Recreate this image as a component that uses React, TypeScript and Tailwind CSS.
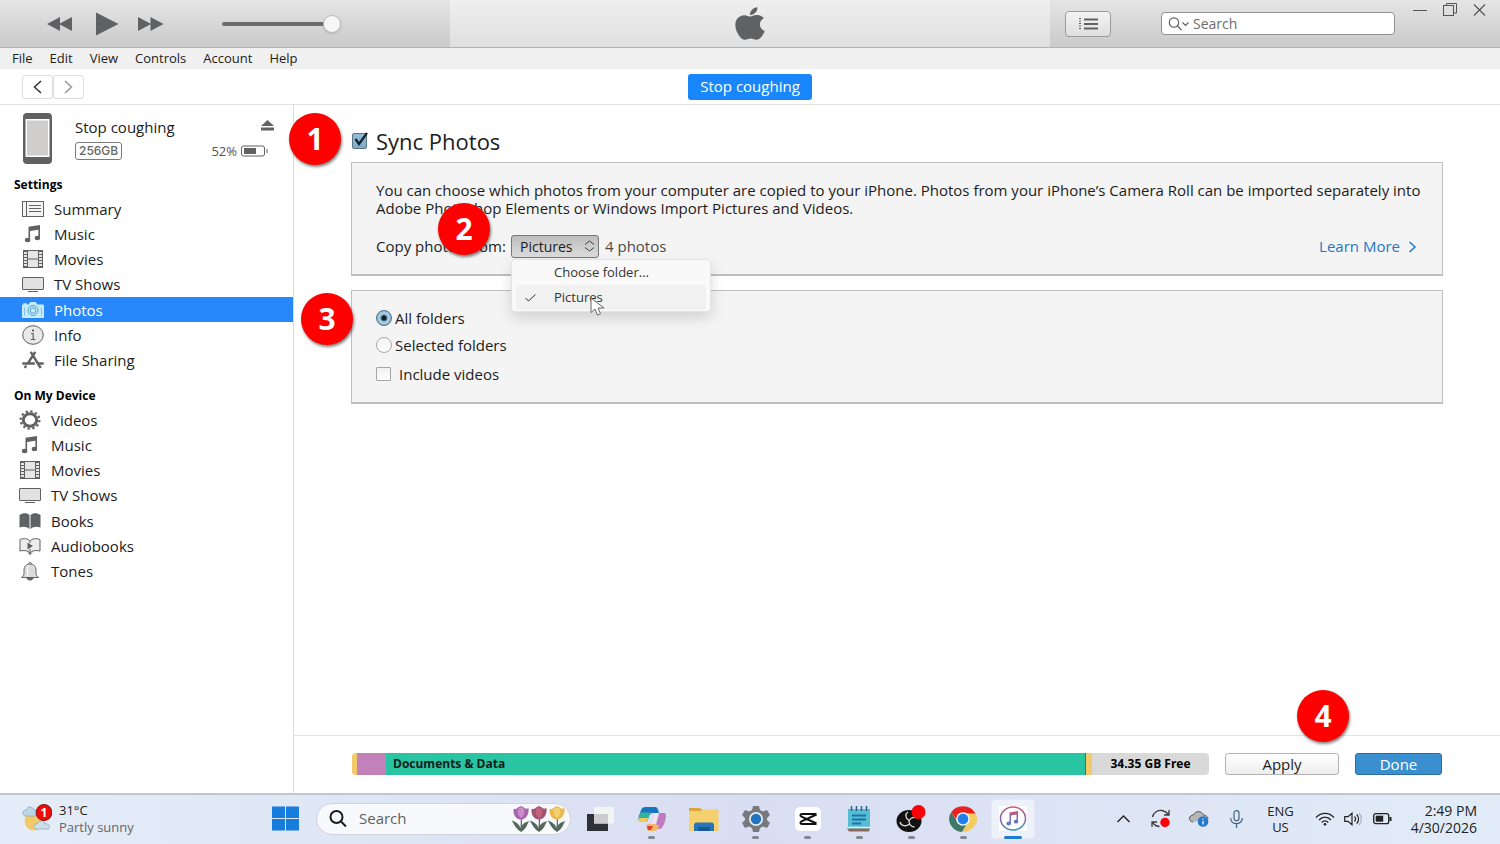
import { useState } from "react";
import type { ReactNode } from "react";
import { FaApple } from "react-icons/fa";

const GREY = "#606163";

function SummaryIcon() {
  return (
    <svg width="22" height="16" viewBox="0 0 22 16" fill="none" stroke={GREY}>
      <rect x="0.5" y="0.5" width="21" height="15" fill="#f4f4f4" />
      <path d="M4.5 0.5v15M7 4.5h12M7 7.5h12M7 10.5h12" />
    </svg>
  );
}

function MusicIcon() {
  return (
    <svg width="22" height="18" viewBox="0 0 22 18" fill={GREY}>
      <path d="M6.5 1.8 18 0v13h-1.6V4.800L8.1 6.1v9.200H6.5z" />
      <ellipse cx="5.6" cy="15" rx="2.7" ry="2.2" />
      <ellipse cx="15.4" cy="13" rx="2.7" ry="2.2" />
    </svg>
  );
}

function MoviesIcon() {
  return (
    <svg width="22" height="18" viewBox="0 0 22 18" fill="none" stroke={GREY}>
      <rect x="1.5" y="0.5" width="19" height="17" fill="#e6e6e6" />
      <path d="M5.5 0.5v17M16.5 0.5v17M5.5 9h11" />
      <path d="M3.5 1v16M18.5 1v16" strokeWidth="3" strokeDasharray="1 2" />
    </svg>
  );
}

function TvIcon() {
  return (
    <svg width="22" height="16" viewBox="0 0 22 16">
      <rect x="0.5" y="1.5" width="21" height="12" rx="0.5" fill="#e2e2e2" stroke={GREY} />
      <rect x="6" y="15" width="10" height="1" fill={GREY} />
    </svg>
  );
}

function PhotosIcon() {
  return (
    <svg width="22" height="16" viewBox="0 0 22 16" fill="none" stroke="#7cc1ee">
      <path
        d="M0.5 3h1V1.8h3V3h2.3l1.6-2.5h5.2L15.2 3h6.3v12.5h-21z"
        fill="#c5ecfa"
        stroke="#c5ecfa"
      />
      <circle cx="11" cy="8.5" r="5" stroke="#4d9fd0" />
      <circle cx="11" cy="8.5" r="2.8" stroke="#4d9fd0" />
      <path d="M2.5 5.5v8M19.5 5.5v8" />
    </svg>
  );
}

function InfoIcon() {
  return (
    <svg width="22" height="20" viewBox="0 0 22 20">
      <ellipse cx="11" cy="10" rx="10.3" ry="9.3" fill="#e8e8e8" stroke={GREY} />
      <rect x="10" y="4.5" width="2" height="2" fill={GREY} />
      <path d="M9 8.5h2.2v6M8.8 14.5h4.6" fill="none" stroke={GREY} strokeWidth="1.2" />
    </svg>
  );
}

function SharingIcon() {
  return (
    <svg width="22" height="18" viewBox="0 0 22 18" fill="none" stroke={GREY} strokeWidth="2.4">
      <path d="M13.3 0.8 5.8 12.5M4.2 14.5 2.8 17M8.7 0.8l10 16.2" />
      <path d="M0.3 12.5h12.5M16 12.5h5.7" />
    </svg>
  );
}

function GearIcon() {
  return (
    <svg width="22" height="20" viewBox="0 0 22 20" fill="none" stroke={GREY}>
      <ellipse cx="11" cy="10" rx="6.7" ry="6.2" strokeWidth="3" />
      <ellipse cx="11" cy="10" rx="9.4" ry="8.6" strokeWidth="2.2" strokeDasharray="2.3 2.42" />
    </svg>
  );
}

function BooksIcon() {
  return (
    <svg width="22" height="16" viewBox="0 0 22 16" fill={GREY}>
      <path d="M0.5 2C4-0.3 8-0.3 10.5 2v14C8 13.5 4 13 0.5 14.5z" />
      <path d="M21.5 2C18-0.3 14-0.3 11.5 2v14c2.5-2.5 6.5-3 10-1.5z" />
    </svg>
  );
}

function AudiobooksIcon() {
  return (
    <svg width="22" height="17" viewBox="0 0 22 17" stroke={GREY} fill="none">
      <path d="M1 1.5C5 0 9 0.5 11 3c2-2.5 6-3 10-1.5V13c-4-1-8-0.5-10 2-2-2.5-6-3-10-2z" fill="#ececec" />
      <path d="M11 3v2M11 11v5.5M9 14.5l2 2 2-2" />
      <path d="M8.5 4.5 14 8l-5.5 3.5z" fill={GREY} stroke="none" />
    </svg>
  );
}

function BellIcon() {
  return (
    <svg width="22" height="19" viewBox="0 0 22 19" stroke={GREY} fill="none">
      <path d="M2.5 15.5c3-2 2.5-4 2.5-7.5 0-3.5 2.5-6 6-6s6 2.5 6 6c0 3.5-.5 5.5 2.5 7.5z" fill="#dcdcdc" />
      <path d="M8.5 14V7.5C8.5 5.5 9 4 10 3" stroke="#fff" />
      <path d="M9.5 2c0-2 3-2 3 0" />
      <path d="M8 16.5c1 2 5 2 6 0z" fill={GREY} />
    </svg>
  );
}

const settings = [
  { label: "Summary", icon: <SummaryIcon /> },
  { label: "Music", icon: <MusicIcon /> },
  { label: "Movies", icon: <MoviesIcon /> },
  { label: "TV Shows", icon: <TvIcon /> },
  { label: "Photos", icon: <PhotosIcon /> },
  { label: "Info", icon: <InfoIcon /> },
  { label: "File Sharing", icon: <SharingIcon /> },
];

const onDevice = [
  { label: "Videos", icon: <GearIcon /> },
  { label: "Music", icon: <MusicIcon /> },
  { label: "Movies", icon: <MoviesIcon /> },
  { label: "TV Shows", icon: <TvIcon /> },
  { label: "Books", icon: <BooksIcon /> },
  { label: "Audiobooks", icon: <AudiobooksIcon /> },
  { label: "Tones", icon: <BellIcon /> },
];

function StepBadge({ step, className }: { step: number; className: string }) {
  return (
    <span
      className={`absolute z-20 flex size-[52px] items-center justify-center rounded-full bg-[#fe0000] text-[30px] leading-none font-bold text-white shadow-[1px_2px_3px_rgba(0,0,0,0.5)] ${className}`}
    >
      {step}
    </span>
  );
}

function TitleBar() {
  return (
    <header className="flex h-12 shrink-0 border-b border-[#b3b3af] bg-linear-to-b from-[#e5e5e5] to-[#cacaca]">
      <div className="flex w-3/10 items-center pl-[47px]">
        <button aria-label="Previous">
          <svg width="26" height="14" viewBox="0 0 26 14" fill={GREY}>
            <path d="M0 7 13 0v14zM12 7 25 0v14z" />
          </svg>
        </button>
        <button aria-label="Play" className="ml-[23px]">
          <svg width="23" height="24" viewBox="0 0 23 24" fill={GREY}>
            <path d="M0 0.5 22.5 12 0 23.5z" />
          </svg>
        </button>
        <button aria-label="Next" className="ml-[19px]">
          <svg width="26" height="14" viewBox="0 0 26 14" fill={GREY}>
            <path d="M0 0 13 7 0 14zM12.5 0l13 7-13 7z" />
          </svg>
        </button>
        <input
          type="range"
          aria-label="Volume"
          defaultValue={100}
          className="ml-[58px] h-1 w-[119px] appearance-none rounded-full bg-[#6b6c6e] [&::-webkit-slider-thumb]:size-[18px] [&::-webkit-slider-thumb]:appearance-none [&::-webkit-slider-thumb]:rounded-full [&::-webkit-slider-thumb]:border [&::-webkit-slider-thumb]:border-[#bdbdbd] [&::-webkit-slider-thumb]:bg-[#f6f6f6] [&::-webkit-slider-thumb]:shadow-sm"
        />
      </div>
      <div className="flex w-2/5 items-center justify-center bg-linear-to-b from-[#efefef] to-[#e0e0e0]">
        <FaApple preserveAspectRatio="none" color={GREY} className="h-[37px] w-[30px]" />
      </div>
      <div className="flex w-3/10 items-start justify-between pr-[14px] pl-[15px]">
        <button
          aria-label="Up next"
          className="mt-[11px] flex h-[26px] w-[46px] items-center justify-center rounded-[4px] border border-[#9a9a9a] bg-linear-to-b from-[#f4f4f4] to-[#dedede]"
        >
          <svg width="20" height="12" viewBox="0 0 20 12" stroke={GREY}>
            <path d="M6 1.5h14M6 6h14M6 10.5h14" strokeWidth="2" />
            <path d="M1 0.500h2M1 3h2M1 5.500h2M1 8h2M1 10.500h2" />
          </svg>
        </button>
        <label className="mt-3 ml-[50px] flex h-[23px] max-w-[234px] flex-1 items-center rounded-[4px] border border-[#8f9194] bg-white pl-1.5">
          <svg className="shrink-0" width="25" height="14" viewBox="0 0 25 14" fill="none" stroke={GREY} strokeWidth="1.2">
            <circle cx="6" cy="5.5" r="4.7" />
            <path d="m9.5 9 4 4M14.5 5.5l3 3 3-3" />
          </svg>
          <input
            type="text"
            placeholder="Search"
            className="w-full min-w-0 text-sm text-gray-700 outline-none placeholder:text-[#6d6d6d]"
          />
        </label>
        <div className="ml-auto flex gap-4 pt-[3px] pl-2">
          <button aria-label="Minimize">
            <svg width="14" height="14" viewBox="0 0 14 14" stroke="#555">
              <path d="M0 7.5h14" />
            </svg>
          </button>
          <button aria-label="Restore">
            <svg width="14" height="14" viewBox="0 0 14 14" fill="none" stroke="#555">
              <rect x="0.5" y="2.5" width="10" height="10" />
              <path d="M3.5 2V0.5h10v9.5H11" />
            </svg>
          </button>
          <button aria-label="Close">
            <svg width="13" height="14" viewBox="0 0 13 14" stroke="#555" strokeWidth="1.2">
              <path d="m1 1.5 11 11M12 1.5l-11 11" />
            </svg>
          </button>
        </div>
      </div>
    </header>
  );
}

interface SidebarListProps {
  items: { label: string; icon: ReactNode }[];
  selected?: string;
  indent: string;
}

function SidebarList({ items, selected, indent }: SidebarListProps) {
  return (
    <ul className="grid h-[177px] auto-rows-fr text-[15px] leading-5">
      {items.map((item) => (
        <li key={item.label} className="flex">
          <button
            className={`flex w-full items-center gap-2.5 text-left ${indent} ${
              item.label === selected ? "bg-[#2787fb] text-white" : "text-[#1c1c1c]"
            }`}
          >
            {item.icon}
            {item.label}
          </button>
        </li>
      ))}
    </ul>
  );
}

function Sidebar() {
  return (
    <aside className="w-[294px] shrink-0 border-r border-[#dcdcdc]">
      <div className="flex h-[69px] gap-[23px] pt-2 pr-[19px] pl-[23px]">
        <svg width="29" height="51" viewBox="0 0 29 51">
          <rect width="29" height="51" rx="4" fill={GREY} />
          <rect x="2.5" y="6" width="24" height="38" fill="#fff" />
          <rect x="4" y="7.5" width="21" height="35" fill="#cfcecd" />
        </svg>
        <div className="flex-1">
          <div className="flex items-center justify-between pt-1">
            <p className="text-[15px] leading-5 text-[#1c1c1c]">Stop coughing</p>
            <button aria-label="Eject">
              <svg width="13" height="14" viewBox="0 0 13 14" fill={GREY}>
                <path d="M6.5 0 13 6H0zM0 7.5h13v3H0z" />
              </svg>
            </button>
          </div>
          <div className="mt-1 flex items-center justify-between pr-1.5">
            <span className="rounded-[3px] border border-[#7b7b7b] px-[3px] font-['Inter',sans-serif] text-xs leading-4 font-medium text-[#666]">
              256GB
            </span>
            <span className="flex items-center gap-1 text-[13px] leading-5 text-[#555]">
              52%
              <svg width="27" height="12" viewBox="0 0 27 12" fill="none" stroke={GREY}>
                <rect x="0.5" y="1" width="23" height="10" rx="2" />
                <rect x="3" y="3" width="12" height="6" fill={GREY} stroke="none" />
                <path d="M26 4v4" />
              </svg>
            </span>
          </div>
        </div>
      </div>
      <h2 className="flex h-[22px] items-center pl-3.5 text-xs font-bold text-black">Settings</h2>
      <SidebarList items={settings} selected="Photos" indent="pl-[22px]" />
      <h2 className="mt-3 flex h-[22px] items-center pl-3.5 text-xs font-bold text-black">On My Device</h2>
      <SidebarList items={onDevice} indent="pl-[19px]" />
    </aside>
  );
}

function FolderPicker() {
  const [folder, setFolder] = useState("Pictures");

  return (
    <div className="relative">
      <select
        id="folder"
        value={folder}
        onChange={(e) => setFolder(e.target.value)}
        className="block h-[23px] w-[88px] appearance-none rounded-[3px] border border-[#77787a] bg-linear-to-b from-[#bdbdbd] to-[#dcdcdc] pl-2 text-sm leading-5 text-[#1c1c1c]"
      >
        <option>Pictures</option>
        <option>Choose folder...</option>
      </select>
      <svg
        className="pointer-events-none absolute top-[5px] right-1"
        width="11"
        height="12"
        viewBox="0 0 11 12"
        fill="none"
        stroke="#444"
      >
        <path d="M1 4.5 5.5 1 10 4.5M1 7.5 5.5 11 10 7.5" />
      </svg>
      <ul
        role="listbox"
        aria-label="Folders"
        className="absolute top-6 left-0 z-10 w-[200px] rounded-[4px] border border-[#e4e4e4] bg-[#f9f9f9] px-1 py-px text-[13px] text-[#333] shadow-[0_6px_14px_rgba(0,0,0,0.14)]"
      >
        <li role="option" aria-selected={false} className="flex h-6 items-center pl-[38px]">
          Choose folder...
        </li>
        <li
          role="option"
          aria-selected
          className="relative flex h-[25px] items-center rounded-[3px] bg-[#f1f1f1] pl-[38px]"
        >
          <svg className="absolute left-[9px]" width="11" height="8" viewBox="0 0 11 8" fill="none" stroke="#333">
            <path d="M0.5 4 3.5 7l7-6.5" />
          </svg>
          Pictures
          <svg className="absolute top-3 left-[74px]" width="16" height="20" viewBox="0 0 16 20">
            <path d="M1 1v14.5l4-3.5 2.5 6 3-1.2L8 11h6z" fill="#fff" stroke="#666" />
          </svg>
        </li>
      </ul>
    </div>
  );
}

function SyncPanel() {
  const [sync, setSync] = useState(true);
  const [mode, setMode] = useState("all");
  const [videos, setVideos] = useState(false);

  const radio =
    "size-4 appearance-none rounded-full border border-[#a8a8a8] bg-linear-to-b from-[#f4f4f4] to-white checked:border-[#4b6a80] checked:bg-[radial-gradient(circle,#14242f_0,#14242f_2px,#a9d0e8_4px,#8db9d4_8px)]";

  return (
    <section className="flex-1 px-[57px] pt-[22px] text-[15px] text-[#1c1c1c]">
      <div className="relative flex h-[35px] items-start">
        <StepBadge step={1} className="-top-3.5 -left-[62px]" />
        <label className="flex items-center gap-2 text-[22px] leading-7">
          <span className="relative flex size-4">
            <input
              type="checkbox"
              checked={sync}
              onChange={(e) => setSync(e.target.checked)}
              className="ml-px size-4 appearance-none rounded-[2px] border border-[#5d7484] bg-linear-to-b from-[#94bcd4] to-[#7cabc6]"
            />
            {sync && (
              <svg
                className="pointer-events-none absolute bottom-0.5 left-[3px]"
                width="14"
                height="15"
                viewBox="0 0 14 15"
                fill="none"
                stroke="#14222d"
                strokeWidth="2.2"
              >
                <path d="M1.500 7l3.500 5L13 1" />
              </svg>
            )}
          </span>
          <span className="pl-px">Sync Photos</span>
        </label>
      </div>

      <div className="h-[114px] border border-b-2 border-[#bfbfbf] bg-[#f4f4f4] pt-[18px] pr-[25px] pl-6">
        <p className="-mr-4 leading-[18px]">
          You can choose which photos from your computer are copied to your iPhone. Photos from your iPhone’s Camera
          Roll can be imported separately into Adobe Photoshop Elements or Windows Import Pictures and Videos.
        </p>
        <div className="relative mt-[18px] flex h-[23px] items-center">
          <StepBadge step={2} className="-top-8 left-[62px]" />
          <label htmlFor="folder" className="w-[135px] whitespace-nowrap">
            Copy photos from:
          </label>
          <FolderPicker />
          <span className="ml-1.5 text-[#4a4a4a]">4 photos</span>
          <a href="#" className="ml-auto flex items-center gap-2 text-[#1d78c6]">
            Learn More
            <svg width="9" height="12" viewBox="0 0 9 12" fill="none" stroke="#1d78c6" strokeWidth="1.5">
              <path d="m1.500 1 5.500 5-5.500 5" />
            </svg>
          </a>
        </div>
      </div>

      <div className="relative mt-3.5 h-[114px] border border-b-2 border-[#bfbfbf] bg-[#f4f4f4] pt-[15px] pl-6">
        <StepBadge step={3} className="top-0.5 -left-[51px]" />
        <label className="flex h-6 items-center gap-[3px]">
          <input type="radio" name="mode" checked={mode === "all"} onChange={() => setMode("all")} className={radio} />
          All folders
        </label>
        <label className="mt-[3px] flex h-6 items-center gap-[3px]">
          <input
            type="radio"
            name="mode"
            checked={mode === "selected"}
            onChange={() => setMode("selected")}
            className={radio}
          />
          Selected folders
        </label>
        <label className="mt-[5px] flex h-6 items-center gap-2">
          <input
            type="checkbox"
            checked={videos}
            onChange={(e) => setVideos(e.target.checked)}
            className="h-3.5 w-[15px] appearance-none rounded-[1px] border border-[#a5a5a5] bg-linear-to-b from-[#f0f0f0] to-white checked:bg-[#8db9d4] checked:bg-none"
          />
          Include videos
        </label>
      </div>
    </section>
  );
}

function CapacityBar() {
  return (
    <footer className="relative flex h-[58px] items-center gap-4 border-t border-[#e4e4e4] pr-[58px] pb-px pl-[58px]">
      <StepBadge step={4} className="-top-[46px] right-[151px]" />
      <div className="flex h-[22px] flex-1 overflow-hidden rounded-[4px] text-xs font-bold text-[#10201b]">
        <div className="w-[5px] bg-[#f2ca6c]" />
        <div className="w-[29px] bg-[#c281b8]" />
        <div className="flex flex-1 items-center bg-[#29c4a1] pl-[7px]">Documents &amp; Data</div>
        <div className="w-[7px] border-l border-[#56636b] bg-[#f2ca6c]" />
        <div className="flex w-[117px] items-center justify-center bg-[#d9d9d9] text-black">34.35 GB Free</div>
      </div>
      <button className="flex h-[22px] w-[114px] items-center justify-center rounded-[3px] border border-[#b3b3b3] bg-linear-to-b from-white to-[#ededed] text-[15px]">
        Apply
      </button>
      <button className="flex h-[22px] w-[87px] items-center justify-center rounded-[3px] border border-[#2b6ca3] bg-[#3a8fd0] text-[15px] text-white">
        Done
      </button>
    </footer>
  );
}

function Tulip({ petal, shade }: { petal: string; shade: string }) {
  return (
    <svg width="18" height="26" viewBox="0 0 18 26">
      <path
        d="M9.500 12 9 25M9 25C8 21 5 17 1 15.500c2 3 3.500 7 8 9.500zM9 25c0-5 3-8 7-9-2 3-2 7-7 9z"
        fill="#55685c"
        stroke="#55685c"
        strokeWidth="1.2"
      />
      <path d="M1.500 3C4 3 5 3 6 1.5L9 0l3 1.5c1 1.5 3 1.5 4.5 0.5 1 6-2.500 11.500-7.500 11.500S1 9 1.500 3z" fill={petal} />
      <path d="M6 3c-1 4 0 7 3 9 3-2 4-5 3-9L9 1z" fill={shade} />
    </svg>
  );
}

const apps = [
  {
    label: "Task View",
    running: false,
    icon: (
      <svg width="28" height="24" viewBox="0 0 28 24">
        <path d="M1 7h21v17H1z" fill="#2e3237" />
        <path d="M8 0h20v16.5H8z" fill="#f3f4f5" />
        <path d="M8 7h14v9.5H8z" fill="#cbccce" />
      </svg>
    ),
  },
  {
    label: "Copilot",
    running: true,
    icon: (
      <svg width="28" height="24" viewBox="0 0 28 24">
        <path d="M7 0h10c3 0 3 3 4 6h-6c-3 0-4 2-5 5l-1 3H2C-1 14 1 9 2 6s2-6 5-6z" fill="#1874c5" />
        <path d="M2.500 5.500h10l-3 8.500H2C-1 14 1.500 9 2.500 5.500z" fill="#34b39b" />
        <path d="M1 11h9l-1 4H2c-2 0-2-2-1-4z" fill="#f0cb5c" />
        <path d="M21 6h5c3 0 2 5 1 8s-2 7-5 8h-5l3-12z" fill="#bf7cc1" />
        <path d="M17 6h4l-4 12c-1 3-2 5-5 5 2-1 2-3 3-7z" fill="#f3e3f2" />
        <path d="M9 17h8l4 2c-1 3-2 5-5 5h-5c-2 0-3-3-2-7z" fill="#f3b861" />
        <path d="M9 19h6l-2 4h-3z" fill="#e33d39" />
      </svg>
    ),
  },
  {
    label: "File Explorer",
    running: false,
    icon: (
      <svg width="30" height="24" viewBox="0 0 30 24">
        <path d="M0 1h11l3 3h15v20H0z" fill="#d9a53c" />
        <path d="M0 4h12l2-1.5h15.5V24H0z" fill="#f4d06f" />
        <path d="M5 24v-6c0-1.5 1-2.5 2.5-2.5h15c1.5 0 2.5 1 2.5 2.5v6z" fill="#2474b8" />
        <path d="M9 20h12v4H9z" fill="#155a97" />
      </svg>
    ),
  },
  {
    label: "Settings",
    running: true,
    icon: (
      <svg width="30" height="26" viewBox="0 0 30 26">
        <path
          d="M12 0h6l1 4 3 1.5 4-1.5 3 5-3 3v2l3 3-3 5-4-1.5L19 22l-1 4h-6l-1-4-3-1.5L4 22l-3-5 3-3v-2L1 9l3-5 4 1.5L11 4z"
          fill="#77797d"
        />
        <circle cx="15" cy="13" r="7" fill="#e7e9ed" />
        <circle cx="15" cy="13" r="5.2" fill="#1f74c2" />
      </svg>
    ),
  },
  {
    label: "CapCut",
    running: true,
    icon: (
      <svg width="26" height="24" viewBox="0 0 26 24">
        <rect width="26" height="24" rx="5" fill="#fff" />
        <path
          d="M20.5 9V7H7C5 7 5 9 6.5 9.7L21.5 16.5M20.5 15v2H7C5 17 5 15 6.5 14.3L21.5 7.5"
          fill="none"
          stroke="#111"
          strokeWidth="2"
        />
      </svg>
    ),
  },
  {
    label: "Notepad",
    running: true,
    icon: (
      <svg width="24" height="26" viewBox="0 0 24 26">
        <path d="M1 3h22v20H1z" fill="#55bcd3" />
        <path d="M0 22.5h23l-1 3H2z" fill="#8c6a54" />
        <path d="M1 21.5h22" stroke="#e7eef0" strokeWidth="1.5" />
        <path d="M4.5 0v5M9.5 0v5M14.5 0v5M19.5 0v5" stroke="#23648a" strokeWidth="1.5" />
        <path d="M5 9.5h14M5 13.5h14M5 17.5h9" stroke="#1d72a8" strokeWidth="1.8" />
      </svg>
    ),
  },
  {
    label: "OBS Studio",
    running: true,
    icon: (
      <svg width="30" height="28" viewBox="0 0 30 28">
        <ellipse cx="13" cy="16" rx="12.5" ry="11" fill="#111" />
        <path
          d="M12 7c-3 2-3 6 1 8.5M21.5 13c-4-1.5-7 0-8.5 3 0 3 2 6 5.5 6M4 17c1 4 6 5 9.5 2"
          fill="none"
          stroke="#d8d8d8"
          strokeWidth="1.3"
        />
        <circle cx="22.5" cy="7" r="7" fill="#fb0007" />
      </svg>
    ),
  },
  {
    label: "Chrome",
    running: true,
    icon: (
      <svg width="28" height="26" viewBox="0 0 28 26">
        <path d="M2 6.5A14 13 0 0 0 13 26l6-9-10-1z" fill="#3d7765" />
        <path d="M26 6.5A14 13 0 0 1 13 26l6-10-2-8.5z" fill="#f3cb60" />
        <path d="M2 6.5 8 14l3-6.5h15.5A14 13 0 0 0 2 6.5z" fill="#e8231c" />
        <circle cx="14" cy="13" r="6.8" fill="#fff" />
        <circle cx="14" cy="13" r="5.4" fill="#2180ea" />
      </svg>
    ),
  },
];

function Taskbar() {
  return (
    <div className="flex h-[51px] shrink-0 items-center border-t-2 border-[#c0c7d3] bg-linear-to-r from-[#e4edf8] via-[#d9def2] to-[#e2ecf8] pb-0.5">
      <button className="flex w-[272px] shrink-0 items-center gap-[7px] pl-[22px] text-left">
        <svg width="30" height="30" viewBox="0 0 30 30">
          <circle cx="12" cy="17" r="9.5" fill="#f3c869" />
          <path d="M3 12c-3-1-3-6 1-6 1-4 7-4 8 0 4 0 4 5 1 6z" fill="#bcd6e8" stroke="#8ea9bb" strokeWidth="0.8" />
          <path d="M14 25c-3-1-3-5 1-5 1-4 8-4 8 0 5-1 6 4 3 5z" fill="#cfdfea" stroke="#8ea9bb" strokeWidth="0.8" />
          <circle cx="22" cy="8.5" r="8" fill="#f00b0b" stroke="#7c1c1c" />
          <text x="22" y="13" textAnchor="middle" fontSize="12" fontWeight="bold" fill="#fff">
            1
          </text>
        </svg>
        <span className="text-[13px] leading-[17px]">
          <span className="block text-[#222]">31°C</span>
          <span className="block text-[#666]">Partly sunny</span>
        </span>
      </button>

      <button aria-label="Start" className="shrink-0">
        <svg width="27" height="25" viewBox="0 0 27 25" fill="#177ddd">
          <path d="M0 0.5h13v11.5H0zM14 0.5h13v11.5H14zM0 13h13v11.5H0zM14 13h13v11.5H14z" />
        </svg>
      </button>
      <label className="ml-[17px] flex h-8 w-[255px] shrink-0 items-center rounded-full border border-[#cfd3de] bg-[#f7f9fd] pr-1 pl-3">
        <svg className="shrink-0" width="18" height="17" viewBox="0 0 18 17" fill="none" stroke="#1b1b1b" strokeWidth="2">
          <circle cx="7.5" cy="7" r="6" />
          <path d="m12 11.5 5 5" />
        </svg>
        <input
          type="text"
          placeholder="Search"
          className="ml-3 w-0 flex-1 text-[15px] outline-none placeholder:text-[#5f5f5f]"
        />
        <Tulip petal="#a765ad" shade="#c98cc9" />
        <Tulip petal="#9c5374" shade="#c6617b" />
        <Tulip petal="#e9b94b" shade="#f3d074" />
      </label>

      <nav aria-label="Apps" className="ml-[5px] flex w-[459px] justify-between">
        {apps.map((app) => (
          <button
            key={app.label}
            aria-label={app.label}
            className="relative flex h-12 w-12 items-center justify-center"
          >
            {app.icon}
            {app.running && <span className="absolute bottom-1 h-[3px] w-[7px] rounded-full bg-[#85878f]" />}
          </button>
        ))}
        <button
          aria-label="iTunes"
          className="relative flex h-10 w-11 items-center justify-center self-center rounded-[4px] border border-[#e5eaf5] bg-[#edf1fa]"
        >
          <svg width="28" height="25" viewBox="0 0 28 25" fill="none">
            <defs>
              <linearGradient id="note" x1="0" y1="0" x2="0" y2="1">
                <stop offset="0" stopColor="#c65b72" />
                <stop offset="0.5" stopColor="#8b64ad" />
                <stop offset="1" stopColor="#3a91cc" />
              </linearGradient>
            </defs>
            <path d="M0 0h28v25H0z" fill="#fff" />
            <ellipse cx="14" cy="12.5" rx="12.5" ry="11.5" stroke="url(#note)" strokeWidth="1.5" />
            <path d="M10.5 6.5 19 5v10.5h-1.5V8.5l-5.5 1v8h-1.5z" fill="url(#note)" />
            <ellipse cx="9.7" cy="17.5" rx="2.3" ry="1.9" fill="#6a76b9" />
            <ellipse cx="17" cy="15.7" rx="2.3" ry="1.9" fill="#6a76b9" />
          </svg>
          <span className="absolute -bottom-px h-[3px] w-[18px] rounded-full bg-[#1f7dcb]" />
        </button>
      </nav>

      <div className="ml-auto flex shrink-0 items-center pr-[23px] text-[13px] leading-4 text-[#222]">
        <button aria-label="Show hidden icons">
          <svg width="13" height="8" viewBox="0 0 13 8" fill="none" stroke="#222" strokeWidth="1.4">
            <path d="M0.5 7 6.5 1l6 6" />
          </svg>
        </button>
        <svg className="ml-[21px]" width="20" height="19" viewBox="0 0 20 19" fill="none" stroke="#3a3a3a" strokeWidth="1.3">
          <path d="M1.5 8C2.5 3 7 1 11 1.5c3 .5 5 2 6.500 4M18 1v5h-5M1 18v-5h5M1.500 13.500c1.500 2 4 4 7 4" />
          <circle cx="14" cy="13.5" r="4.7" fill="#fb0007" stroke="none" />
        </svg>
        <svg className="ml-[18px]" width="20" height="16" viewBox="0 0 20 16">
          <path d="M4 11C-1 10.500-.5 4 4.500 4 6-.5 13-.5 14.500 4c3 0 4.500 2.500 4.500 4" fill="#b6b6b6" stroke="#555" />
          <circle cx="14" cy="10.5" r="5.3" fill="#2279c9" />
          <path d="M14 10v3.5M14 7.500v1.200" stroke="#fff" strokeWidth="1.3" />
        </svg>
        <svg className="ml-[21px]" width="13" height="18" viewBox="0 0 13 18" fill="none" stroke="#456380" strokeWidth="1.2">
          <rect x="4" y="0.7" width="5" height="10" rx="2.5" />
          <path d="M0.7 8c0 7.5 11.600 7.500 11.600 0M6.500 13.700V18" />
        </svg>
        <span className="ml-6 text-center">
          ENG
          <br />
          US
        </span>
        <svg className="ml-[21px]" width="20" height="14" viewBox="0 0 20 14" fill="none" stroke="#222" strokeWidth="1.2">
          <path d="M1 5.500c5-5.500 13-5.500 18 0M4 8c3.500-3.800 8.500-3.800 12 0M6.700 10.500c2-2.200 4.600-2.200 6.600 0" />
          <circle cx="10" cy="12.3" r="1.3" fill="#222" stroke="none" />
        </svg>
        <svg className="ml-[9px]" width="18" height="14" viewBox="0 0 18 14" fill="none" stroke="#222" strokeWidth="1.2">
          <path d="M0.700 4.700H4l4-3.500v11.600L4 9.300H0.700zM10.500 4.500c1.300 1.500 1.300 3.500 0 5M12.700 2.500c2.500 2.500 2.500 6.500 0 9" />
          <path d="M15 1c3.200 3.500 3.200 8.500 0 12" stroke="#aab3c0" />
        </svg>
        <svg className="ml-[11px]" width="19" height="12" viewBox="0 0 19 12">
          <rect x="0.7" y="0.7" width="15" height="10" rx="2" fill="none" stroke="#222" strokeWidth="1.3" />
          <rect x="2.7" y="2.7" width="7.5" height="6" fill="#222" />
          <path d="M17.500 4v4" stroke="#222" strokeWidth="2" />
        </svg>
        <span className="ml-[19px] text-right text-sm leading-[17px]">
          2:49 PM
          <br />
          4/30/2026
        </span>
      </div>
    </div>
  );
}

export default function App() {
  return (
    <div className="flex min-h-screen flex-col bg-white font-['Open_Sans','Noto_Sans',sans-serif] text-[#1c1c1c]">
      <TitleBar />
      <nav aria-label="Menu" className="flex h-[21px] shrink-0 items-center gap-[17px] bg-[#f0f0f0] pl-3 text-[13px]">
        <button>File</button>
        <button>Edit</button>
        <button>View</button>
        <button>Controls</button>
        <button>Account</button>
        <button>Help</button>
      </nav>
      <div className="grid h-9 shrink-0 grid-cols-[1fr_auto_1fr] items-center border-b border-[#e2e2e2] px-[22px]">
        <div className="flex">
          <button
            aria-label="Back"
            className="flex h-6 w-[31px] items-center justify-center rounded-[3px] border border-[#dedede] bg-white"
          >
            <svg width="9" height="14" viewBox="0 0 9 14" fill="none" stroke="#333" strokeWidth="1.5">
              <path d="M8 1 1.5 7 8 13" />
            </svg>
          </button>
          <button
            aria-label="Forward"
            className="flex h-6 w-[31px] items-center justify-center rounded-[3px] border border-[#dedede] bg-white"
          >
            <svg width="9" height="14" viewBox="0 0 9 14" fill="none" stroke="#999" strokeWidth="1.5">
              <path d="m1 1 6.5 6L1 13" />
            </svg>
          </button>
        </div>
        <button className="flex h-[26px] items-center rounded-[3px] bg-[#1a86fb] px-3 text-[15px] text-white">
          Stop coughing
        </button>
      </div>
      <div className="flex flex-1">
        <Sidebar />
        <main className="flex min-w-0 flex-1 flex-col">
          <SyncPanel />
          <CapacityBar />
        </main>
      </div>
      <Taskbar />
    </div>
  );
}
